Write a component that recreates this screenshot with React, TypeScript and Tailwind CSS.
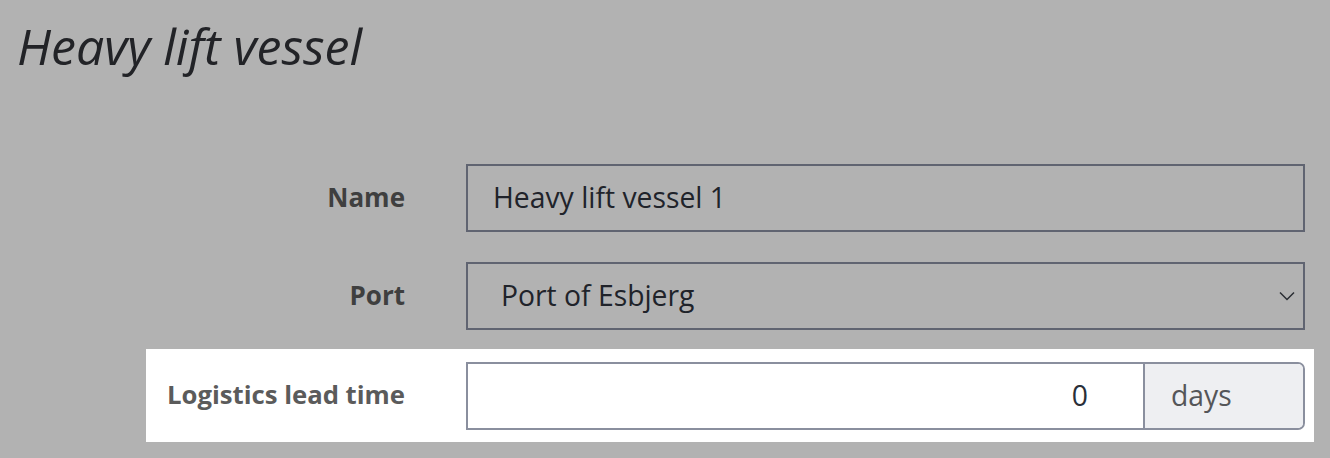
import React from 'react';

const font = { fontFamily: '"Open Sans", "Noto Sans", sans-serif' };

function Chevron() {
  return (
    <svg width="16" height="10" viewBox="0 0 16 10" fill="none" className="shrink-0">
      <path d="M1 1.5L8 8.5L15 1.5" stroke="#2a2d33" strokeWidth="1.5" />
    </svg>
  );
}

export default function App() {
  return (
    <div className="w-[1330px] h-[458px] overflow-hidden bg-[#b2b2b2]" style={font}>
      <h1 className="pl-[17px] pt-[17px] text-[50px] leading-[58px] italic text-[#222327]">
        Heavy lift vessel
      </h1>

      <div className="ml-[146px] mt-[76px] w-[1168px] flex flex-col">
        {/* Name */}
        <div className="flex items-center h-[93px] pr-[9px]">
          <label className="w-[259px] text-right text-[26px] font-bold text-[#3f3f3f]">Name</label>
          <div className="ml-[61px] flex-1 h-[68px] border-2 border-[#606471] flex items-center pl-[25px] text-[28.3px] text-[#20232a]">
            Heavy lift vessel 1
          </div>
        </div>

        {/* Port */}
        <div className="mt-[5px] flex items-center h-[93px] pr-[9px]">
          <label className="w-[259px] text-right text-[26px] font-bold text-[#3f3f3f]">Port</label>
          <div className="ml-[61px] flex-1 h-[68px] border-2 border-[#606471] flex items-center justify-between pl-[33px] pr-[8px] text-[28.3px] text-[#20232a]">
            <span>Port of Esbjerg</span>
            <Chevron />
          </div>
        </div>

        {/* Logistics lead time (highlighted) */}
        <div className="mt-[7px] flex items-center h-[93px] pr-[9px] bg-white">
          <label className="w-[259px] text-right text-[25.7px] font-bold text-[#5b5b5b]">Logistics lead time</label>
          <div className="ml-[61px] flex-1 h-[68px] flex border-2 border-[#8a8f9e] rounded-r-[7px] overflow-hidden">
            <div className="flex-1 flex items-center justify-end pr-[55px] text-[28.3px] text-[#2a2f38]">0</div>
            <div className="w-[160px] border-l-2 border-[#8a8f9e] bg-[#eeeff2] flex items-center pl-[26px] text-[28.3px] text-[#555659]">
              days
            </div>
          </div>
        </div>
      </div>
    </div>
  );
}
